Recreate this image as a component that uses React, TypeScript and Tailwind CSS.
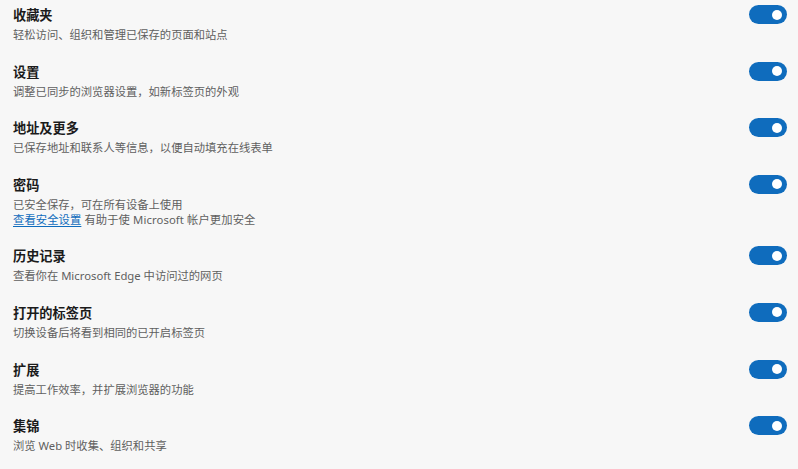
const font = { fontFamily: '"Noto Sans", "Noto Sans CJK SC", sans-serif' }

interface Item {
  title: string
  desc: string
  extra?: boolean
}

const items: Item[] = [
  { title: "收藏夹", desc: "轻松访问、组织和管理已保存的页面和站点" },
  { title: "设置", desc: "调整已同步的浏览器设置，如新标签页的外观" },
  { title: "地址及更多", desc: "已保存地址和联系人等信息，以便自动填充在线表单" },
  { title: "密码", desc: "已安全保存，可在所有设备上使用", extra: true },
  { title: "历史记录", desc: "查看你在 Microsoft Edge 中访问过的网页" },
  { title: "打开的标签页", desc: "切换设备后将看到相同的已开启标签页" },
  { title: "扩展", desc: "提高工作效率，并扩展浏览器的功能" },
  { title: "集锦", desc: "浏览 Web 时收集、组织和共享" },
]

function Toggle() {
  return (
    <div className="w-[38px] h-[19px] rounded-full bg-[#0f6cbd] flex items-center justify-end pr-[5px] shrink-0">
      <span className="w-[10px] h-[10px] rounded-full bg-white" />
    </div>
  )
}

export default function App() {
  return (
    <div style={font} className="w-[798px] h-[469px] bg-[#f7f7f7] overflow-hidden pt-[5px] pl-[13px] pr-[11px]">
      {items.map(item => (
        <div key={item.title} className="flex justify-between items-start mb-[19.6px]">
          <div className="flex flex-col gap-[2px]">
            <div className="text-[13.2px] leading-[20px] font-bold text-[#1b1b1b]">{item.title}</div>
            <div className="text-[11.3px] leading-[15px] text-[#5f5f5f]">
              {item.desc}
              {item.extra && (
                <div className="tracking-[0.1px]">
                  <span className="text-[#0f6cbd] underline underline-offset-2">查看安全设置</span> 有助于使 Microsoft 帐户更加安全
                </div>
              )}
            </div>
          </div>
          <Toggle />
        </div>
      ))}
    </div>
  )
}
